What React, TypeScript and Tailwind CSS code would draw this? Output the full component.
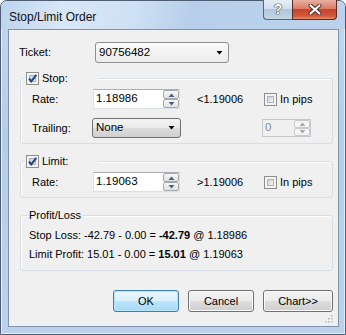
import React from 'react';

const font = "font-['Liberation_Sans',Arial,sans-serif]";

function CheckBox({ checked }: { checked: boolean }) {
  return (
    <span className="relative flex h-[13px] w-[13px] shrink-0 items-center justify-center border border-[#8e8f8f] bg-[#f4f4f4]">
      <span className="absolute inset-[2px] border border-[#aeb3b9] bg-[linear-gradient(135deg,#cbcfd5,#f6f6f6)]" />
      {checked && (
        <svg width="11" height="11" viewBox="0 0 11 11" className="relative">
          <path d="M2 5.5 L4.3 8.3 L9.3 1.8" fill="none" stroke="#22408f" strokeWidth="2" />
        </svg>
      )}
    </span>
  );
}

function Arrow({ up, color }: { up?: boolean; color: string }) {
  return (
    <svg width="7" height="4" viewBox="0 0 7 4">
      <path d={up ? 'M0.5 4 L3.5 0.5 L6.5 4 Z' : 'M0.5 0 L3.5 3.5 L6.5 0 Z'} fill={color} />
    </svg>
  );
}

function Spinner({ disabled }: { disabled?: boolean }) {
  const btn = disabled
    ? 'flex flex-1 items-center justify-center rounded-[2px] border border-[#c9c9c9] bg-[#f4f4f4]'
    : 'flex flex-1 items-center justify-center rounded-[2px] border border-[#a5a9ad] bg-[linear-gradient(#f7f7f7,#dfe2e5)]';
  const c = disabled ? '#a9a9a9' : '#4a6187';
  return (
    <div className="flex w-[16px] flex-col gap-[0px]">
      <div className={btn}>
        <Arrow up color={c} />
      </div>
      <div className={btn}>
        <Arrow color={c} />
      </div>
    </div>
  );
}

function RateBox({ value }: { value: string }) {
  return (
    <div className="flex h-[20px] w-[87px] border border-[#dbdfe6] border-t-[#abadb3] bg-white">
      <div className="flex flex-1 items-center pl-[2px] text-[11.5px] text-black">{value}</div>
      <Spinner />
    </div>
  );
}

function Combo({ value, w, light }: { value: string; w: string; light?: boolean }) {
  return (
    <div
      className={`flex h-full items-center justify-between rounded-[3px] border pl-[3px] pr-[5px] ${w} ${
        light
          ? 'border-[#8e8f8f] bg-[linear-gradient(#fafafa,#ececec)]'
          : 'border-[#707070] bg-[linear-gradient(#f3f3f3_0%,#ebebeb_49%,#dddddd_50%,#cfcfcf_100%)]'
      }`}
    >
      <span className="text-[11.5px]">{value}</span>
      <Arrow color="#000" />
    </div>
  );
}

function Button({ label, w, primary }: { label: string; w: string; primary?: boolean }) {
  return (
    <div
      className={`flex h-[22px] items-center justify-center rounded-[3px] border text-[11px] ${w} ${
        primary
          ? 'border-[#3c7fb1] bg-[linear-gradient(#eaf6fd_0%,#d9f0fc_49%,#bee6fd_50%,#a7d9f5_100%)] shadow-[inset_0_0_0_1px_#b9e6fb]'
          : 'border-[#707070] bg-[linear-gradient(#f3f3f3_0%,#ebebeb_49%,#dddddd_50%,#cfcfcf_100%)] shadow-[inset_0_0_0_1px_#fbfbfb]'
      }`}
    >
      {label}
    </div>
  );
}

function Group({ children, header, headerW, headerLeft }: { children: React.ReactNode; header: React.ReactNode; headerW: string; headerLeft: string }) {
  return (
    <div className="relative ml-[11px] mr-[5px] rounded-[3px] border border-[#d5dfe5] shadow-[inset_1px_1px_0_#ffffff]">
      <div className={`absolute -top-[7px] flex h-[13px] items-center bg-[#f0f0f0] ${headerW} ${headerLeft}`}>{header}</div>
      {children}
    </div>
  );
}

export default function App() {
  return (
    <div className={`${font} flex h-[335px] w-[346px] flex-col rounded-t-[7px] border border-[#4f5e72] bg-[linear-gradient(#c3d8f0,#b6cde8_40%,#bcd2ec)] text-black shadow-[inset_0_0_0_1px_#e4eefa]`}>
      {/* title bar */}
      <div className="flex h-[28px] shrink-0 items-start rounded-t-[6px] bg-[linear-gradient(100deg,#bcd4ee_0%,#d8e7f8_18%,#cfe1f5_38%,#b7cfea_55%,#bcd2ec_100%)] pl-[8px] pr-[8px]">
        <span className="mt-[7px] text-[12px] text-[#111]">Stop/Limit Order</span>
        <div className="-mt-[1px] ml-auto flex">
          <div className="flex h-[20px] w-[29px] items-center justify-center rounded-bl-[4px] border border-r-0 border-t-0 border-[#56667c] bg-[linear-gradient(#e6eef6_0%,#d3dfec_45%,#b2c5da_50%,#c4d5e7_100%)]">
            <span className="text-[14px] font-bold text-white [text-shadow:0_0_1px_#27323f,0_0_1px_#27323f,0_0_1px_#27323f]">?</span>
          </div>
          <div className="flex h-[20px] w-[45px] items-center justify-center rounded-br-[4px] border border-t-0 border-[#5b2b22] bg-[linear-gradient(#eab1a3_0%,#dd7a64_45%,#c8432c_50%,#d2593d_85%,#e98d66_100%)]">
            <svg width="14" height="11" viewBox="0 0 14 11">
              <path d="M2.5 1.5 L11.5 9.5 M11.5 1.5 L2.5 9.5" stroke="#4a2a24" strokeWidth="4" strokeLinecap="round" />
              <path d="M2.5 1.5 L11.5 9.5 M11.5 1.5 L2.5 9.5" stroke="#ffffff" strokeWidth="2.2" strokeLinecap="round" />
            </svg>
          </div>
        </div>
      </div>

      {/* client area */}
      <div className="relative mb-[7px] ml-[7px] mr-[6px] flex flex-1 flex-col border border-[#8193a9] bg-[#f0f0f0] text-[11px]">
        {/* ticket */}
        <div className="mt-[12px] flex h-[21px] items-center pl-[10px]">
          <span className="w-[76px]">Ticket:</span>
          <Combo value="90756482" w="w-[134px]" light />
        </div>

        {/* stop */}
        <div className="mt-[15px]">
          <Group
            headerW="w-[73px]"
            headerLeft="left-[4px]"
            header={
              <div className="flex items-center gap-[3px] pl-[1px]">
                <CheckBox checked />
                <span>Stop:</span>
              </div>
            }
          >
            <div className="pb-[5px] pl-[11px] pt-[10px]">
              <div className="flex h-[20px] items-center">
                <span className="w-[61px]">Rate:</span>
                <RateBox value="1.18986" />
                <span className="ml-[17px] w-[67px]">&lt;1.19006</span>
                <CheckBox checked={false} />
                <span className="ml-[3px]">In pips</span>
              </div>
              <div className="mt-[9px] flex h-[20px] items-center">
                <span className="w-[60px]">Trailing:</span>
                <Combo value="None" w="w-[89px]" />
                <div className="ml-[81px] flex h-[18px] w-[49px] border border-[#c4c8cc] bg-[#f0f0f0]">
                  <div className="flex flex-1 items-center pl-[2px] text-[11.5px] text-[#8a8a8a]">0</div>
                  <Spinner disabled />
                </div>
              </div>
            </div>
          </Group>
        </div>

        {/* limit */}
        <div className="mt-[17px]">
          <Group
            headerW="w-[74px]"
            headerLeft="left-[4px]"
            header={
              <div className="flex items-center gap-[3px] pl-[1px]">
                <CheckBox checked />
                <span>Limit:</span>
              </div>
            }
          >
            <div className="pb-[5px] pl-[11px] pt-[10px]">
              <div className="flex h-[20px] items-center">
                <span className="w-[61px]">Rate:</span>
                <RateBox value="1.19063" />
                <span className="ml-[17px] w-[67px]">&gt;1.19006</span>
                <CheckBox checked={false} />
                <span className="ml-[3px]">In pips</span>
              </div>
            </div>
          </Group>
        </div>

        {/* profit / loss */}
        <div className="mt-[17px]">
          <Group headerW="w-[54px]" headerLeft="left-[7px]" header={<span className="pl-[1px]">Profit/Loss</span>}>
            <div className="pb-[6px] pl-[8px] pt-[10px] leading-[19px]">
              <div>
                Stop Loss: -42.79 - 0.00 = <b>-42.79</b> @ 1.18986
              </div>
              <div>
                Limit Profit: 15.01 - 0.00 = <b>15.01</b> @ 1.19063
              </div>
            </div>
          </Group>
        </div>

        {/* buttons */}
        <div className="mr-[5px] mt-[19px] flex justify-end gap-[9px]">
          <Button label="OK" w="w-[66px]" primary />
          <Button label="Cancel" w="w-[66px]" />
          <Button label="Chart>>" w="w-[70px]" />
        </div>

        <svg width="10" height="10" viewBox="0 0 10 10" className="absolute bottom-[3px] right-[5px]">
          {[
            [8, 2],
            [8, 5],
            [5, 5],
            [8, 8],
            [5, 8],
            [2, 8],
          ].map(([x, y], i) => (
            <rect key={i} x={x} y={y} width="1.5" height="1.5" fill="#b4b4b4" />
          ))}
        </svg>
      </div>
    </div>
  );
}
